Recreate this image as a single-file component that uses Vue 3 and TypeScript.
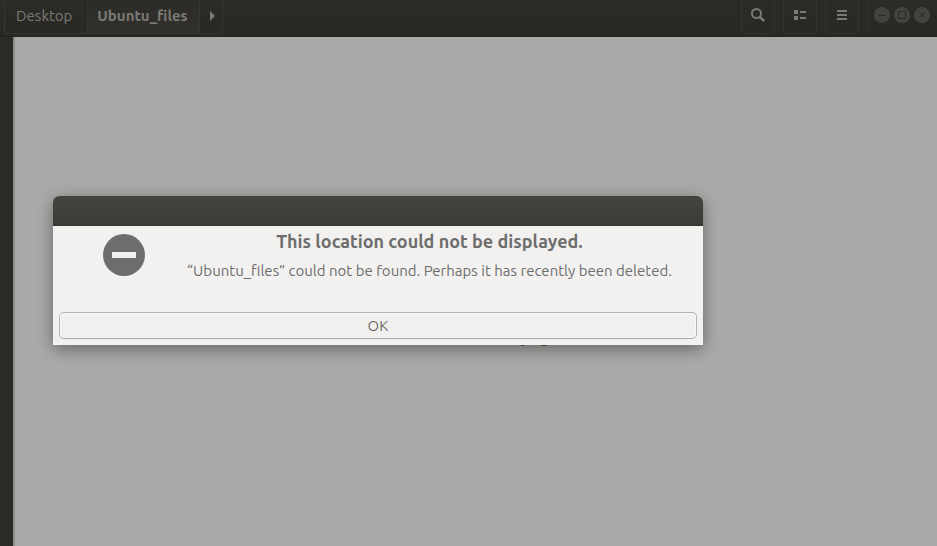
<script setup lang="ts">
import { ref } from 'vue'

interface Crumb {
  label: string
  current: boolean
}

const crumbs: Crumb[] = [
  { label: 'Desktop', current: false },
  { label: 'Ubuntu_files', current: true },
]
const open = ref(true)
</script>

<template>
  <div class="window">
    <header class="bar">
      <nav class="path" aria-label="Path">
        <button
          v-for="c in crumbs"
          :key="c.label"
          type="button"
          class="crumb"
          :class="{ current: c.current }"
        >{{ c.label }}</button>
        <button type="button" class="next" aria-label="Next folder">
          <svg width="5" height="10" viewBox="0 0 5 10"><path d="M0 0L5 5L0 10Z" fill="currentColor" /></svg>
        </button>
      </nav>
      <div class="tools">
        <button type="button" class="tool" aria-label="Search">
          <svg width="16" height="16" viewBox="0 0 16 16" fill="none" stroke="currentColor">
            <circle cx="6.5" cy="6.5" r="4.5" stroke-width="2" />
            <path d="M9.8 9.8L14.2 14.2" stroke-width="2.4" />
          </svg>
        </button>
        <button type="button" class="tool" aria-label="View options">
          <svg width="16" height="16" viewBox="0 0 16 16" fill="currentColor">
            <path d="M2 3h4v4H2zM2 9h4v4H2zM8 4h6v2H8zM8 10h6v2H8z" />
          </svg>
        </button>
        <button type="button" class="tool" aria-label="Menu">
          <svg width="16" height="16" viewBox="0 0 16 16" fill="currentColor">
            <path d="M3 3h10v2H3zM3 7h10v2H3zM3 11h10v2H3z" />
          </svg>
        </button>
      </div>
      <div class="controls">
        <button type="button" class="control" aria-label="Minimize">
          <svg width="16" height="16" viewBox="0 0 16 16"><path d="M4 8.5H12" /></svg>
        </button>
        <button type="button" class="control" aria-label="Maximize">
          <svg width="16" height="16" viewBox="0 0 16 16"><path d="M4.5 4.5H11.5V11.5H4.5Z" /></svg>
        </button>
        <button type="button" class="control" aria-label="Close">
          <svg width="16" height="16" viewBox="0 0 16 16"><path d="M5.5 5.5L10.5 10.5M10.5 5.5L5.5 10.5" /></svg>
        </button>
      </div>
    </header>
    <div class="body">
      <aside class="side"></aside>
      <main class="files">
        <p class="empty">Folder is Empty</p>
      </main>
    </div>

    <section v-if="open" class="dialog" role="alertdialog" aria-labelledby="dlg-title" aria-describedby="dlg-text">
      <div class="titlebar"></div>
      <div class="message">
        <svg class="stop" width="42" height="42" viewBox="0 0 42 42">
          <circle cx="21" cy="21" r="21" fill="#6d6d6d" />
          <rect x="9" y="18" width="24" height="6" fill="#f2f1ef" />
        </svg>
        <div class="texts">
          <h1 id="dlg-title">This location could not be displayed.</h1>
          <p id="dlg-text">“Ubuntu_files” could not be found. Perhaps it has recently been deleted.</p>
        </div>
      </div>
      <div class="actions">
        <button type="button" class="ok" @click="open = false">OK</button>
      </div>
    </section>
  </div>
</template>

<style>
body {
  background: #a9a9a7;
}
</style>

<style scoped>
.window {
  position: relative;
  display: flex;
  flex-direction: column;
  min-height: 100vh;
  overflow: hidden;
  font-family: Ubuntu, "Noto Sans", "Open Sans", sans-serif;
  font-size: 15px;
}
button {
  margin: 0;
  padding: 0;
  border: 0;
  background: none;
  font: inherit;
  color: inherit;
}
svg {
  display: block;
}
.bar {
  display: flex;
  align-items: flex-start;
  box-sizing: border-box;
  height: 37px;
  padding: 0 7px 0 4px;
  background: linear-gradient(#2c2b28, #292824);
  border-bottom: 1px solid #242320;
  color: #7b7a74;
}
.path {
  display: flex;
  box-sizing: border-box;
  height: 34px;
  border: 1px solid #373632;
  border-top: 0;
  border-radius: 0 0 5px 0;
}
.crumb {
  padding: 0 13px 2px 11px;
}
.current {
  padding: 0 11px 2px;
  font-weight: 700;
  background: linear-gradient(#2c2b28, #32312d);
  border-left: 1px solid #22211e;
  border-right: 1px solid #373632;
}
.next {
  display: flex;
  align-items: center;
  padding: 0 7px 2px 10px;
}
.tools {
  display: flex;
  gap: 8px;
  margin-left: auto;
}
.tool {
  display: flex;
  justify-content: center;
  align-items: center;
  box-sizing: border-box;
  width: 34px;
  height: 34px;
  padding-bottom: 3px;
  border: 1px solid #34332f;
  border-top: 0;
  border-radius: 0 0 5px 5px;
}
.controls {
  display: flex;
  align-items: center;
  gap: 4px;
  height: 30px;
  margin-left: 9px;
  padding-left: 5px;
  border-left: 1px solid #33322e;
}
.control {
  width: 16px;
  height: 16px;
  border-radius: 50%;
  background: #44433f;
}
.control path {
  fill: none;
  stroke: #292824;
}
.body {
  display: flex;
  flex: 1;
}
.side {
  width: 13px;
  background: #2b2a25;
}
.files {
  display: flex;
  flex: 1;
  justify-content: center;
  align-items: center;
  border-left: 2px solid #8d8d8b;
  background: #a9a9a7;
}
.empty {
  margin: 84px 0 0;
  font-size: 21px;
  line-height: 24px;
  font-weight: 700;
  color: #4a4a48;
}
.dialog {
  position: absolute;
  top: 196px;
  left: 53px;
  width: 650px;
  max-width: calc(100% - 106px);
  border-radius: 6px 6px 0 0;
  background: #f2f1ef;
  box-shadow: 0 4px 16px rgba(0, 0, 0, 0.4);
  color: #6d6d6d;
}
.titlebar {
  height: 30px;
  box-sizing: border-box;
  border-radius: 6px 6px 0 0;
  border-bottom: 1px solid #353430;
  background: linear-gradient(#44433e, #3b3a36);
}
.message {
  display: flex;
  justify-content: center;
  gap: 42px;
  padding: 3px 20px 0 39px;
}
.stop {
  margin-top: 5px;
}
.texts {
  text-align: center;
}
h1 {
  margin: 0;
  font-size: 18px;
  line-height: 24px;
  font-weight: 700;
}
.texts p {
  margin: 7px 0 0;
  line-height: 22px;
}
.actions {
  padding: 30px 6px 6px;
}
.ok {
  display: block;
  width: 100%;
  height: 27px;
  border: 1px solid #b5b4b2;
  border-bottom-color: #a5a5a2;
  border-radius: 5px;
  background: #f1f0ee;
  box-shadow: inset 0 0 0 1px #f8f8f7;
}
</style>
